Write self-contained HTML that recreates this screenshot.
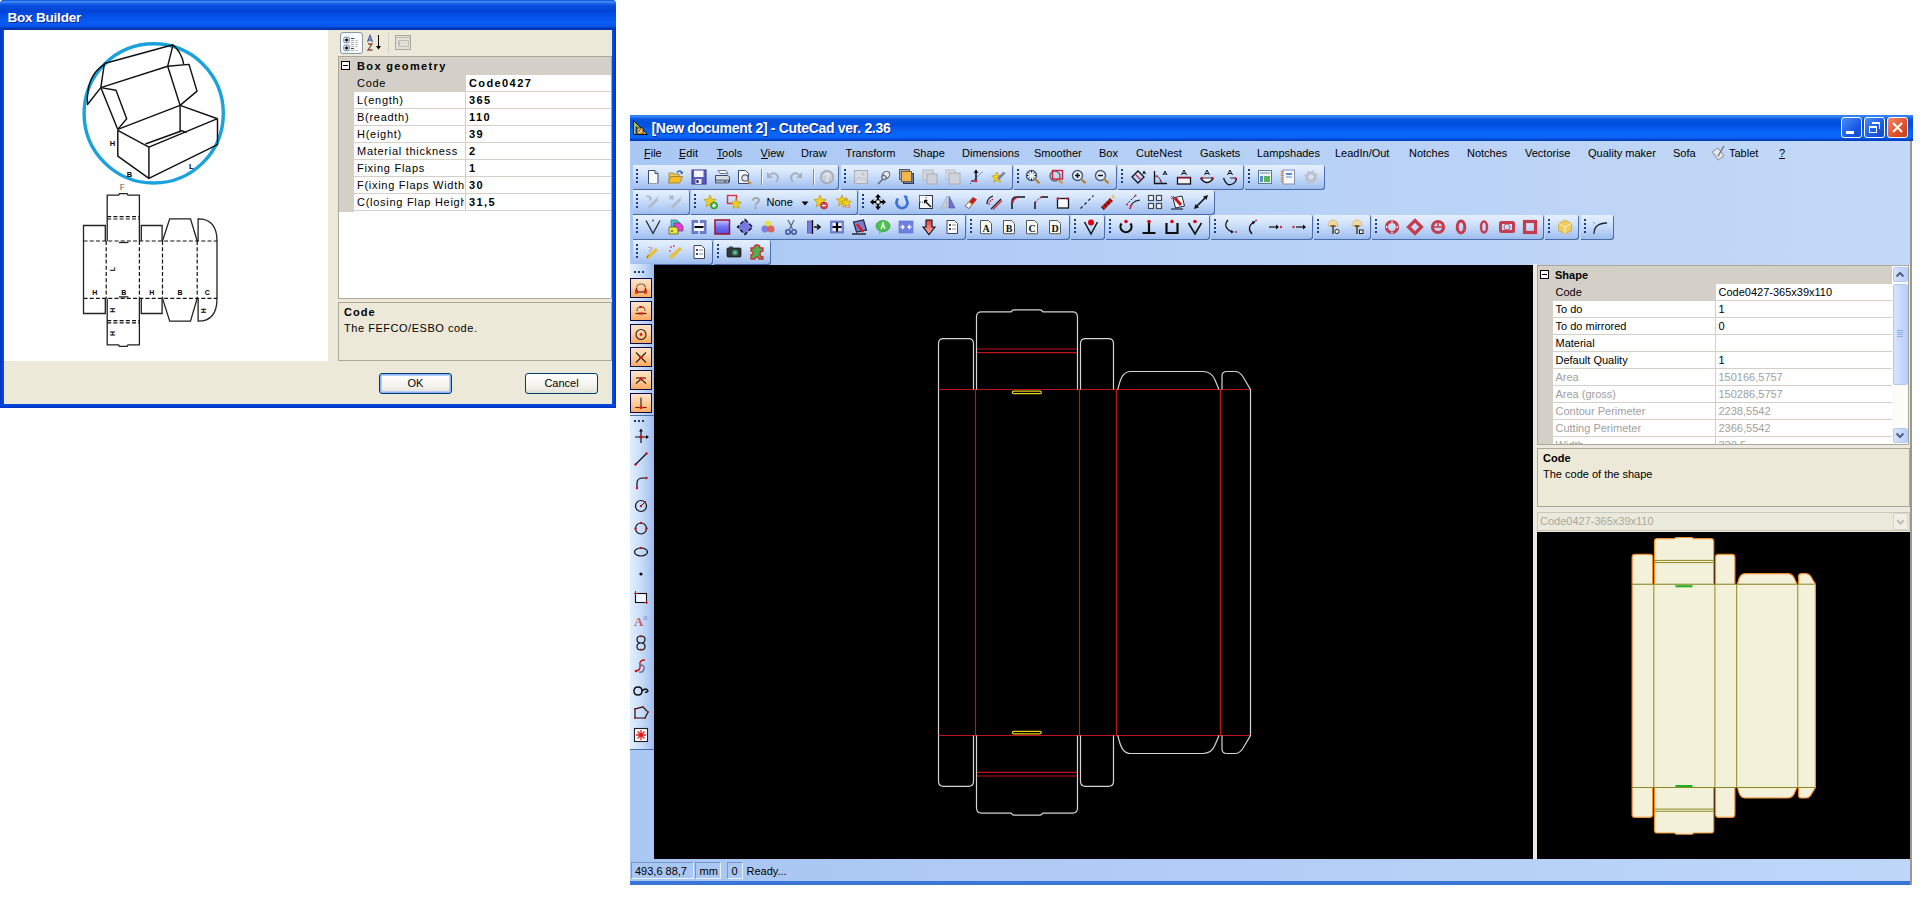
<!DOCTYPE html><html><head><meta charset="utf-8"><style>
*{box-sizing:border-box;margin:0;padding:0}
html,body{width:1926px;height:898px;overflow:hidden;background:#fff;font-family:"Liberation Sans",sans-serif;font-size:11px;color:#000;position:relative}
.a{position:absolute}
.t{position:absolute;white-space:nowrap;line-height:11px;font-size:11px}
.b{font-weight:bold}
.ic{position:absolute;width:16px;height:16px;overflow:visible}
.tb{position:absolute;height:25px;border-radius:0 3px 3px 0;background:linear-gradient(#e4effd 0px,#d9e8fc 6px,#c6dbf9 12px,#a9c5f1 21px,#9dbcef 24px);box-shadow:inset -1px -1px 0 #4a6ca8}
.grip{position:absolute;width:2px;height:14px;background:repeating-linear-gradient(#1d3f80 0px,#1d3f80 2px,transparent 2px,transparent 4px)}
.sep{position:absolute;width:1px;height:18px;background:#6a8ccb;box-shadow:1px 0 0 #fff}
</style></head><body><div class="a" style="left:0px;top:0px;width:616px;height:408px;background:#0838c8;border-radius:4px 4px 0 0"></div>
<div class="a" style="left:0px;top:0px;width:616px;height:30px;border-radius:4px 4px 0 0;background:linear-gradient(#0a48d8 0px,#3c8af6 1.5px,#2a74f0 3px,#0a50e0 5px,#0044d6 11px,#0450e6 16px,#0a5cf6 22px,#0656ee 26px,#0038b8 28.5px,#0030a8 30px)"></div>
<div class="a" style="left:0px;top:30px;width:4px;height:377px;background:linear-gradient(90deg,#0032c0,#0a4ee8)"></div>
<div class="a" style="left:612px;top:30px;width:4px;height:377px;background:linear-gradient(90deg,#0a4ee8,#0032c0)"></div>
<div class="a" style="left:0px;top:403.5px;width:616px;height:4.5px;background:linear-gradient(#0a4ee8,#0032c0)"></div>
<div class="t" style="left:7.5px;top:10.91px;font-size:13.5px;line-height:13.5px;font-weight:bold;color:#fff;text-shadow:1px 1px 0 #0a2a8e;letter-spacing:-0.2px;">Box Builder</div>
<div class="a" style="left:4px;top:30px;width:608px;height:374px;background:#ece9d8"></div>
<div class="a" style="left:4px;top:30px;width:324px;height:331px;background:#fff"></div>
<svg class="a" style="left:0;top:0" width="330" height="362" viewBox="0 0 330 362"><circle cx="153.7" cy="113.4" r="69.6" fill="none" stroke="#1ba1dc" stroke-width="3.4"/><g fill="none" stroke="#111" stroke-width="1.45" stroke-linejoin="round"><polyline points="104.4,63.5 173.0,44.8"/><polyline points="173.0,44.8 167.7,66.2"/><polyline points="100.8,87.6 167.7,66.2"/><polyline points="104.4,63.5 100.8,87.6"/><polyline points="167.7,66.2 189.0,64.4 197.0,91.1 180.1,105.4"/><polyline points="167.7,66.2 180.1,105.4"/><polyline points="100.8,87.6 116.0,90.2 126.7,118.7 117.8,129.4"/><polyline points="100.8,87.6 117.8,129.4"/><polyline points="117.8,129.4 180.1,105.4"/><polyline points="180.1,105.4 217.5,118.7"/><polyline points="117.8,130.3 148.9,147.2 217.5,118.7"/><polyline points="145.4,144.0 181.9,130.7 186.4,132.6"/><polyline points="180.1,105.4 180.1,131.2"/><polyline points="117.8,130.3 117.8,156.2 148.9,178.4 217.5,144.6 217.5,118.7"/><polyline points="148.9,147.2 148.9,178.4"/><path d="M104.4,64.4 Q85.7,76.0 87.5,104.5 L100.8,87.6"/><path d="M173.0,44.8 Q181.9,52.8 183.7,64.4"/></g><g font-family="Liberation Sans"><text x="109.7" y="146.4" font-size="7.5" font-weight="bold">H</text><text x="126.7" y="176.6" font-size="7.5" font-weight="bold">B</text><text x="189.0" y="169.0" font-size="7.5" font-weight="bold">L</text></g><g fill="none" stroke="#222" stroke-width="1.3"><polyline points="83.5,241.0 83.5,225.5 105.3,225.5 105.3,241.0"/><polyline points="83.5,298.4 83.5,313.5 105.3,313.5 105.3,298.4"/><polyline points="83.5,241.0 83.5,298.4"/><polyline points="107.2,241.0 107.2,195.2 118.6,195.2 119.5,193.6 127.1,193.6 128.0,195.2 139.4,195.2 139.4,241.0"/><polyline points="107.2,298.4 107.2,344.8 118.6,344.8 119.5,346.3 127.1,346.3 128.0,344.8 139.4,344.8 139.4,298.4"/><polyline points="141.3,241.0 141.3,225.5 162.1,225.5 162.1,241.0"/><polyline points="141.3,298.4 141.3,313.5 162.1,313.5 162.1,298.4"/><polyline points="162.5,241.0 169.7,218.8 190.5,218.8 197.2,241.0"/><polyline points="162.5,298.4 169.7,321.1 190.5,321.1 197.2,298.4"/><path d="M198.1,241.0 L198.1,218.8 Q217.0,218.8 217.0,241.0 L217.0,298.4 Q217.0,321.1 198.1,321.1 L198.1,298.4"/><polyline points="118.9,242.5 128.4,242.5"/><polyline points="118.9,296.9 128.4,296.9"/></g><g fill="none" stroke="#111" stroke-width="1.2" stroke-dasharray="4 2.2"><polyline points="83.5,241.0 217.0,241.0"/><polyline points="83.5,298.4 217.0,298.4"/><polyline points="106.2,241.0 106.2,298.4"/><polyline points="139.4,241.0 139.4,298.4"/><polyline points="162.5,241.0 162.5,298.4"/><polyline points="197.2,241.0 197.2,298.4"/><polyline points="107.2,216.7 139.4,216.7"/><polyline points="107.2,219.0 139.4,219.0"/><polyline points="107.2,320.7 139.4,320.7"/><polyline points="107.2,322.8 139.4,322.8"/></g><g font-family="Liberation Sans"><text x="94.9" y="293.6" font-size="7" font-weight="bold" text-anchor="middle" dominant-baseline="middle" transform="rotate(0 94.9 293.6)">H</text><text x="123.9" y="293.6" font-size="7" font-weight="bold" text-anchor="middle" dominant-baseline="middle" transform="rotate(0 123.9 293.6)">B</text><text x="151.7" y="293.6" font-size="7" font-weight="bold" text-anchor="middle" dominant-baseline="middle" transform="rotate(0 151.7 293.6)">H</text><text x="180.1" y="293.6" font-size="7" font-weight="bold" text-anchor="middle" dominant-baseline="middle" transform="rotate(0 180.1 293.6)">B</text><text x="207.2" y="293.6" font-size="7" font-weight="bold" text-anchor="middle" dominant-baseline="middle" transform="rotate(0 207.2 293.6)">C</text><text x="112.9" y="269.0" font-size="7" font-weight="bold" text-anchor="middle" dominant-baseline="middle" transform="rotate(-90 112.9 269.0)">L</text><text x="112.9" y="310.3" font-size="7" font-weight="bold" text-anchor="middle" dominant-baseline="middle" transform="rotate(-90 112.9 310.3)">H</text><text x="112.9" y="333.4" font-size="7" font-weight="bold" text-anchor="middle" dominant-baseline="middle" transform="rotate(-90 112.9 333.4)">H</text><text x="204.4" y="310.7" font-size="7" font-weight="bold" text-anchor="middle" dominant-baseline="middle" transform="rotate(-90 204.4 310.7)">H</text><text x="122.0" y="190.4" font-size="9" fill="#666" text-anchor="middle" font-family="Liberation Serif">F</text></g></svg>
<div class="a" style="left:340px;top:32px;width:23px;height:22px;border:1px solid #8a98a8;border-radius:3px;background:#f8fbfe"></div>
<svg class="ic" style="left:343px;top:35.5px" viewBox="0 0 16 16"><rect x="0.8" y="1.2" width="5.5" height="5.5" rx="1" fill="#dce8f4" stroke="#7a8aa0"/><path d="M2 4h3.2M3.6 2.4v3.2" stroke="#000" stroke-width="1.3"/><rect x="0.8" y="9.2" width="5.5" height="5.5" rx="1" fill="#dce8f4" stroke="#7a8aa0"/><path d="M2 12h3.2M3.6 10.4v3.2" stroke="#000" stroke-width="1.3"/><path d="M8 2.5h3.5" stroke="#303030" stroke-width="0.9"/><path d="M8 4.5h3M12.5 4.5h2M8 6.5h3M12.5 6.5h2M8 8.5h3M12.5 8.5h2M8 10.5h3M12.5 10.5h2M8 14.5h3M12.5 14.5h2" stroke="#98a0a8" stroke-width="0.8"/><path d="M8 12.5h3" stroke="#303030" stroke-width="0.9"/></svg>
<svg class="ic" style="left:366px;top:35px" viewBox="0 0 16 16"><path d="M1.5 7L4 0.5 6.5 7M2.5 5h3" stroke="#5060a8" stroke-width="1.3" fill="none"/><path d="M2 9h4L2 15h4.5" stroke="#8a4a40" stroke-width="1.3" fill="none"/><path d="M12.5 0v13.5" stroke="#000" stroke-width="1"/><path d="M10 11l2.5 3.5 2.5-3.5z" fill="#000"/></svg>
<div class="a" style="left:388px;top:33px;width:1px;height:21px;background:#d4d0c4"></div>
<div class="a" style="left:395px;top:35px;width:16px;height:15px;border:1px solid #aaa89e;background:#e4e2d8"></div>
<div class="a" style="left:396px;top:37px;width:14px;height:1px;background:#bcbab0"></div>
<div class="a" style="left:397.5px;top:39.5px;width:11px;height:7px;border:1px solid #c0beb4"></div>
<div class="a" style="left:399px;top:42px;width:1px;height:1px;background:#999"></div>
<div class="a" style="left:399px;top:44px;width:1px;height:1px;background:#999"></div>
<div class="a" style="left:338px;top:56px;width:274px;height:243px;background:#fff;border:1px solid #aca899"></div>
<div class="a" style="left:339px;top:57px;width:272px;height:18px;background:#d4d0c8"></div>
<div class="a" style="left:339px;top:57px;width:15px;height:155px;background:#d4d0c8"></div>
<div class="a" style="left:341px;top:61px;width:9px;height:9px;border:1px solid #000;background:#fff"></div>
<div class="a" style="left:343px;top:65px;width:5px;height:1px;background:#000"></div>
<div class="t" style="left:357px;top:61.2px;font-size:11px;line-height:11px;font-weight:bold;color:#000;letter-spacing:1.36px;">Box geometry</div>
<div class="a" style="left:353px;top:75px;width:112px;height:17px;background:#d4d0c8"></div>
<div class="a" style="left:353px;top:91px;width:258px;height:1px;background:#d4d0c8"></div>
<div class="a" style="left:465px;top:75px;width:1px;height:17px;background:#d4d0c8"></div>
<div class="a" style="left:357px;top:75px;width:107px;height:17px;overflow:hidden"><div class="t" style="left:0px;top:3.0px;font-size:11px;line-height:11px;color:#000;letter-spacing:0.72px;">Code</div></div>
<div class="t" style="left:469px;top:78.0px;font-size:11px;line-height:11px;font-weight:bold;color:#000;letter-spacing:1.4px;">Code0427</div>
<div class="a" style="left:353px;top:108px;width:258px;height:1px;background:#d4d0c8"></div>
<div class="a" style="left:465px;top:92px;width:1px;height:17px;background:#d4d0c8"></div>
<div class="a" style="left:357px;top:92px;width:107px;height:17px;overflow:hidden"><div class="t" style="left:0px;top:3.0px;font-size:11px;line-height:11px;color:#000;letter-spacing:0.72px;">L(ength)</div></div>
<div class="t" style="left:469px;top:95.0px;font-size:11px;line-height:11px;font-weight:bold;color:#000;letter-spacing:1.4px;">365</div>
<div class="a" style="left:353px;top:125px;width:258px;height:1px;background:#d4d0c8"></div>
<div class="a" style="left:465px;top:109px;width:1px;height:17px;background:#d4d0c8"></div>
<div class="a" style="left:357px;top:109px;width:107px;height:17px;overflow:hidden"><div class="t" style="left:0px;top:3.0px;font-size:11px;line-height:11px;color:#000;letter-spacing:0.72px;">B(readth)</div></div>
<div class="t" style="left:469px;top:112.0px;font-size:11px;line-height:11px;font-weight:bold;color:#000;letter-spacing:1.4px;">110</div>
<div class="a" style="left:353px;top:142px;width:258px;height:1px;background:#d4d0c8"></div>
<div class="a" style="left:465px;top:126px;width:1px;height:17px;background:#d4d0c8"></div>
<div class="a" style="left:357px;top:126px;width:107px;height:17px;overflow:hidden"><div class="t" style="left:0px;top:3.0px;font-size:11px;line-height:11px;color:#000;letter-spacing:0.72px;">H(eight)</div></div>
<div class="t" style="left:469px;top:129.0px;font-size:11px;line-height:11px;font-weight:bold;color:#000;letter-spacing:1.4px;">39</div>
<div class="a" style="left:353px;top:159px;width:258px;height:1px;background:#d4d0c8"></div>
<div class="a" style="left:465px;top:143px;width:1px;height:17px;background:#d4d0c8"></div>
<div class="a" style="left:357px;top:143px;width:107px;height:17px;overflow:hidden"><div class="t" style="left:0px;top:3.0px;font-size:11px;line-height:11px;color:#000;letter-spacing:0.72px;">Material thickness</div></div>
<div class="t" style="left:469px;top:146.0px;font-size:11px;line-height:11px;font-weight:bold;color:#000;letter-spacing:1.4px;">2</div>
<div class="a" style="left:353px;top:176px;width:258px;height:1px;background:#d4d0c8"></div>
<div class="a" style="left:465px;top:160px;width:1px;height:17px;background:#d4d0c8"></div>
<div class="a" style="left:357px;top:160px;width:107px;height:17px;overflow:hidden"><div class="t" style="left:0px;top:3.0px;font-size:11px;line-height:11px;color:#000;letter-spacing:0.72px;">Fixing Flaps</div></div>
<div class="t" style="left:469px;top:163.0px;font-size:11px;line-height:11px;font-weight:bold;color:#000;letter-spacing:1.4px;">1</div>
<div class="a" style="left:353px;top:193px;width:258px;height:1px;background:#d4d0c8"></div>
<div class="a" style="left:465px;top:177px;width:1px;height:17px;background:#d4d0c8"></div>
<div class="a" style="left:357px;top:177px;width:107px;height:17px;overflow:hidden"><div class="t" style="left:0px;top:3.0px;font-size:11px;line-height:11px;color:#000;letter-spacing:0.72px;">F(ixing Flaps Width</div></div>
<div class="t" style="left:469px;top:180.0px;font-size:11px;line-height:11px;font-weight:bold;color:#000;letter-spacing:1.4px;">30</div>
<div class="a" style="left:353px;top:210px;width:258px;height:1px;background:#d4d0c8"></div>
<div class="a" style="left:465px;top:194px;width:1px;height:17px;background:#d4d0c8"></div>
<div class="a" style="left:357px;top:194px;width:107px;height:17px;overflow:hidden"><div class="t" style="left:0px;top:3.0px;font-size:11px;line-height:11px;color:#000;letter-spacing:0.72px;">C(losing Flap Heigh</div></div>
<div class="t" style="left:469px;top:197.0px;font-size:11px;line-height:11px;font-weight:bold;color:#000;letter-spacing:1.4px;">31,5</div>
<div class="a" style="left:338px;top:302px;width:274px;height:59px;border:1px solid #aca899;background:#ece9d8"></div>
<div class="t" style="left:344px;top:306.7px;font-size:11px;line-height:11px;font-weight:bold;color:#000;letter-spacing:1.0px;">Code</div>
<div class="t" style="left:344px;top:322.7px;font-size:11px;line-height:11px;color:#000;letter-spacing:0.53px;">The FEFCO/ESBO code.</div>
<div class="a" style="left:379px;top:373px;width:73px;height:21px;border:1px solid #003c74;border-radius:3px;background:linear-gradient(#fff 0%,#f4f3ee 60%,#e3e1d6 100%);box-shadow:inset 0 0 0 1px #8cb4f2,inset 0 0 0 2px #b6cff6"></div><div class="t" style="left:379px;top:378px;width:73px;text-align:center">OK</div>
<div class="a" style="left:525px;top:373px;width:73px;height:21px;border:1px solid #003c74;border-radius:3px;background:linear-gradient(#fff 0%,#f4f3ee 60%,#e3e1d6 100%)"></div><div class="t" style="left:525px;top:378px;width:73px;text-align:center">Cancel</div>
<div class="a" style="left:630px;top:115px;width:1284px;height:769px;background:linear-gradient(90deg,#aac8f4,#c4d9f7)"></div>
<div class="a" style="left:630px;top:115px;width:1284px;height:26px;background:linear-gradient(#2a78f0 0px,#3c8cf8 1px,#2c7af4 2px,#0a56e2 4px,#0050de 8px,#0254e4 12px,#0862f6 16px,#0a66fa 21px,#0860f4 23px,#0044cc 24.5px,#003cb8 26px)"></div>
<div class="t" style="left:651.5px;top:121.35px;font-size:14px;line-height:14px;font-weight:bold;color:#fff;text-shadow:1px 1px 0 #0a2a8e;letter-spacing:-0.3px;">[New document 2] - CuteCad ver. 2.36</div>
<svg class="a" style="left:632px;top:119px" width="17" height="17" viewBox="0 0 17 17"><path d="M1.5 1.5v14h14z" fill="#a8c060" stroke="#101010" stroke-width="1"/><path d="M4 7.5v7h6.5z" fill="#0a5ae6" stroke="#101010" stroke-width="0.6"/><rect x="5" y="9" width="6" height="6" fill="#f0c060" stroke="#402000" stroke-width="0.8"/><path d="M6.5 12.5l2-2" stroke="#402000"/></svg>
<svg class="a" style="left:1710px;top:145px" width="16" height="16" viewBox="0 0 16 16"><path d="M2 7l6-4 6 8-6 4z" fill="#e8e8ec" stroke="#707888" stroke-width="0.8"/><path d="M8 11l6-10" stroke="#606878" stroke-width="1.2"/><path d="M4 8q2 3 5 4" fill="none" stroke="#b0b4c0"/></svg>
<div class="a" style="left:1841px;top:117px;width:21px;height:21px;border:1px solid #fff;border-radius:3px;background:linear-gradient(135deg,#4c8df8,#1a5ce8 60%,#1248c8)"></div>
<div class="a" style="left:1864px;top:117px;width:21px;height:21px;border:1px solid #fff;border-radius:3px;background:linear-gradient(135deg,#4c8df8,#1a5ce8 60%,#1248c8)"></div>
<div class="a" style="left:1887px;top:117px;width:21px;height:21px;border:1px solid #fff;border-radius:3px;background:linear-gradient(135deg,#f08a6a,#e0502a 60%,#c43c18)"></div>
<div class="a" style="left:1846px;top:131px;width:8px;height:3px;background:#fff"></div>
<div class="a" style="left:1869px;top:126px;width:8px;height:7px;border:1.5px solid #fff;border-top-width:2.5px"></div>
<div class="a" style="left:1872px;top:122px;width:8px;height:7px;border:1.5px solid #fff;border-top-width:2.5px;border-left:none;border-bottom:none"></div>
<svg class="a" style="left:1887px;top:117px" width="21" height="21"><path d="M6 6l9 9M15 6l-9 9" stroke="#fff" stroke-width="2"/></svg>
<div class="t" style="left:644px;top:148.2px;font-size:11px;line-height:11px;color:#000;">File</div>
<div class="t" style="left:679px;top:148.2px;font-size:11px;line-height:11px;color:#000;">Edit</div>
<div class="t" style="left:716.6px;top:148.2px;font-size:11px;line-height:11px;color:#000;">Tools</div>
<div class="t" style="left:760.6px;top:148.2px;font-size:11px;line-height:11px;color:#000;">View</div>
<div class="t" style="left:801px;top:148.2px;font-size:11px;line-height:11px;color:#000;">Draw</div>
<div class="t" style="left:845.6px;top:148.2px;font-size:11px;line-height:11px;color:#000;">Transform</div>
<div class="t" style="left:913px;top:148.2px;font-size:11px;line-height:11px;color:#000;">Shape</div>
<div class="t" style="left:962px;top:148.2px;font-size:11px;line-height:11px;color:#000;">Dimensions</div>
<div class="t" style="left:1034px;top:148.2px;font-size:11px;line-height:11px;color:#000;">Smoother</div>
<div class="t" style="left:1099px;top:148.2px;font-size:11px;line-height:11px;color:#000;">Box</div>
<div class="t" style="left:1136px;top:148.2px;font-size:11px;line-height:11px;color:#000;">CuteNest</div>
<div class="t" style="left:1200px;top:148.2px;font-size:11px;line-height:11px;color:#000;">Gaskets</div>
<div class="t" style="left:1257px;top:148.2px;font-size:11px;line-height:11px;color:#000;">Lampshades</div>
<div class="t" style="left:1335px;top:148.2px;font-size:11px;line-height:11px;color:#000;">LeadIn/Out</div>
<div class="t" style="left:1409px;top:148.2px;font-size:11px;line-height:11px;color:#000;">Notches</div>
<div class="t" style="left:1467px;top:148.2px;font-size:11px;line-height:11px;color:#000;">Notches</div>
<div class="t" style="left:1525px;top:148.2px;font-size:11px;line-height:11px;color:#000;">Vectorise</div>
<div class="t" style="left:1588px;top:148.2px;font-size:11px;line-height:11px;color:#000;">Quality maker</div>
<div class="t" style="left:1673px;top:148.2px;font-size:11px;line-height:11px;color:#000;">Sofa</div>
<div class="t" style="left:1729px;top:148.2px;font-size:11px;line-height:11px;color:#000;">Tablet</div>
<div class="t" style="left:1779px;top:148.2px;font-size:11px;line-height:11px;color:#000;">?</div>
<div class="a" style="left:644px;top:158px;width:6px;height:1px;background:#000"></div>
<div class="a" style="left:679px;top:158px;width:6px;height:1px;background:#000"></div>
<div class="a" style="left:716.6px;top:158px;width:7px;height:1px;background:#000"></div>
<div class="a" style="left:760.6px;top:158px;width:7px;height:1px;background:#000"></div>
<div class="a" style="left:1779px;top:158px;width:6px;height:1px;background:#000"></div>
<div class="tb" style="left:633px;top:165px;width:206px"></div>
<div class="grip" style="left:636px;top:169px"></div>
<div class="tb" style="left:841px;top:165px;width:172px"></div>
<div class="grip" style="left:844px;top:169px"></div>
<div class="tb" style="left:1014px;top:165px;width:103px"></div>
<div class="grip" style="left:1017px;top:169px"></div>
<div class="tb" style="left:1118px;top:165px;width:126px"></div>
<div class="grip" style="left:1121px;top:169px"></div>
<div class="tb" style="left:1245px;top:165px;width:80px"></div>
<div class="grip" style="left:1248px;top:169px"></div>
<div class="tb" style="left:633px;top:190px;width:57px"></div>
<div class="grip" style="left:636px;top:194px"></div>
<div class="tb" style="left:691px;top:190px;width:167px"></div>
<div class="grip" style="left:694px;top:194px"></div>
<div class="tb" style="left:859px;top:190px;width:356px"></div>
<div class="grip" style="left:862px;top:194px"></div>
<div class="tb" style="left:633px;top:214.5px;width:333px"></div>
<div class="grip" style="left:636px;top:218.5px"></div>
<div class="tb" style="left:967px;top:214.5px;width:103px"></div>
<div class="grip" style="left:970px;top:218.5px"></div>
<div class="tb" style="left:1071px;top:214.5px;width:34px"></div>
<div class="grip" style="left:1074px;top:218.5px"></div>
<div class="tb" style="left:1106px;top:214.5px;width:104px"></div>
<div class="grip" style="left:1109px;top:218.5px"></div>
<div class="tb" style="left:1211px;top:214.5px;width:102px"></div>
<div class="grip" style="left:1214px;top:218.5px"></div>
<div class="tb" style="left:1314px;top:214.5px;width:57px"></div>
<div class="grip" style="left:1317px;top:218.5px"></div>
<div class="tb" style="left:1372px;top:214.5px;width:172px"></div>
<div class="grip" style="left:1375px;top:218.5px"></div>
<div class="tb" style="left:1545px;top:214.5px;width:34px"></div>
<div class="grip" style="left:1548px;top:218.5px"></div>
<div class="tb" style="left:1581px;top:214.5px;width:33px"></div>
<div class="grip" style="left:1584px;top:218.5px"></div>
<div class="tb" style="left:633px;top:239.5px;width:80px"></div>
<div class="grip" style="left:636px;top:243.5px"></div>
<div class="tb" style="left:714px;top:239.5px;width:57px"></div>
<div class="grip" style="left:717px;top:243.5px"></div>
<div class="a" style="left:630px;top:264px;width:24px;height:486px;background:linear-gradient(90deg,#e4effd,#c6dbf9 50%,#9dbcef);box-shadow:inset 0 -1px 0 #4a6ca8"></div>
<div class="a" style="left:654px;top:264.5px;width:879px;height:594.5px;background:#000"></div>
<div class="a" style="left:1533px;top:264px;width:4px;height:595px;background:#f0efe6"></div>
<div class="a" style="left:1533px;top:264.5px;width:378px;height:595px;background:#eceadf"></div>
<div class="a" style="left:1537px;top:265px;width:372px;height:180px;background:#fff;border:1px solid #aca899"></div>
<div class="a" style="left:1538px;top:266px;width:355px;height:18px;background:#d4d0c8"></div>
<div class="a" style="left:1538px;top:266px;width:15px;height:178px;background:#d4d0c8"></div>
<div class="a" style="left:1540px;top:270px;width:9px;height:9px;border:1px solid #000;background:#fff"></div>
<div class="a" style="left:1542px;top:274px;width:5px;height:1px;background:#000"></div>
<div class="t" style="left:1555px;top:270.2px;font-size:11px;line-height:11px;font-weight:bold;color:#000;">Shape</div>
<div class="a" style="left:1538px;top:266px;width:355px;height:178px;overflow:hidden">
<div class="a" style="left:14px;top:17.5px;width:163px;height:17px;background:#d4d0c8"></div>
<div class="a" style="left:14px;top:33.5px;width:341px;height:1px;background:#d4d0c8"></div>
<div class="a" style="left:177px;top:17.5px;width:1px;height:17px;background:#d4d0c8"></div>
<div class="t" style="left:17.5px;top:21.2px;font-size:11px;line-height:11px;color:#000;">Code</div>
<div class="t" style="left:180.5px;top:21.2px;font-size:11px;line-height:11px;color:#000;">Code0427-365x39x110</div>
<div class="a" style="left:14px;top:50.5px;width:341px;height:1px;background:#d4d0c8"></div>
<div class="a" style="left:177px;top:34.5px;width:1px;height:17px;background:#d4d0c8"></div>
<div class="t" style="left:17.5px;top:38.2px;font-size:11px;line-height:11px;color:#000;">To do</div>
<div class="t" style="left:180.5px;top:38.2px;font-size:11px;line-height:11px;color:#000;">1</div>
<div class="a" style="left:14px;top:67.5px;width:341px;height:1px;background:#d4d0c8"></div>
<div class="a" style="left:177px;top:51.5px;width:1px;height:17px;background:#d4d0c8"></div>
<div class="t" style="left:17.5px;top:55.2px;font-size:11px;line-height:11px;color:#000;">To do mirrored</div>
<div class="t" style="left:180.5px;top:55.2px;font-size:11px;line-height:11px;color:#000;">0</div>
<div class="a" style="left:14px;top:84.5px;width:341px;height:1px;background:#d4d0c8"></div>
<div class="a" style="left:177px;top:68.5px;width:1px;height:17px;background:#d4d0c8"></div>
<div class="t" style="left:17.5px;top:72.2px;font-size:11px;line-height:11px;color:#000;">Material</div>
<div class="t" style="left:180.5px;top:72.2px;font-size:11px;line-height:11px;color:#000;"></div>
<div class="a" style="left:14px;top:101.5px;width:341px;height:1px;background:#d4d0c8"></div>
<div class="a" style="left:177px;top:85.5px;width:1px;height:17px;background:#d4d0c8"></div>
<div class="t" style="left:17.5px;top:89.2px;font-size:11px;line-height:11px;color:#000;">Default Quality</div>
<div class="t" style="left:180.5px;top:89.2px;font-size:11px;line-height:11px;color:#000;">1</div>
<div class="a" style="left:14px;top:118.5px;width:341px;height:1px;background:#d4d0c8"></div>
<div class="a" style="left:177px;top:102.5px;width:1px;height:17px;background:#d4d0c8"></div>
<div class="t" style="left:17.5px;top:106.2px;font-size:11px;line-height:11px;color:#a0a0a0;">Area</div>
<div class="t" style="left:180.5px;top:106.2px;font-size:11px;line-height:11px;color:#a0a0a0;">150166,5757</div>
<div class="a" style="left:14px;top:135.5px;width:341px;height:1px;background:#d4d0c8"></div>
<div class="a" style="left:177px;top:119.5px;width:1px;height:17px;background:#d4d0c8"></div>
<div class="t" style="left:17.5px;top:123.2px;font-size:11px;line-height:11px;color:#a0a0a0;">Area (gross)</div>
<div class="t" style="left:180.5px;top:123.2px;font-size:11px;line-height:11px;color:#a0a0a0;">150286,5757</div>
<div class="a" style="left:14px;top:152.5px;width:341px;height:1px;background:#d4d0c8"></div>
<div class="a" style="left:177px;top:136.5px;width:1px;height:17px;background:#d4d0c8"></div>
<div class="t" style="left:17.5px;top:140.2px;font-size:11px;line-height:11px;color:#a0a0a0;">Contour Perimeter</div>
<div class="t" style="left:180.5px;top:140.2px;font-size:11px;line-height:11px;color:#a0a0a0;">2238,5542</div>
<div class="a" style="left:14px;top:169.5px;width:341px;height:1px;background:#d4d0c8"></div>
<div class="a" style="left:177px;top:153.5px;width:1px;height:17px;background:#d4d0c8"></div>
<div class="t" style="left:17.5px;top:157.2px;font-size:11px;line-height:11px;color:#a0a0a0;">Cutting Perimeter</div>
<div class="t" style="left:180.5px;top:157.2px;font-size:11px;line-height:11px;color:#a0a0a0;">2366,5542</div>
<div class="a" style="left:14px;top:186.5px;width:341px;height:1px;background:#d4d0c8"></div>
<div class="a" style="left:177px;top:170.5px;width:1px;height:17px;background:#d4d0c8"></div>
<div class="t" style="left:17.5px;top:174.2px;font-size:11px;line-height:11px;color:#a0a0a0;">Width</div>
<div class="t" style="left:180.5px;top:174.2px;font-size:11px;line-height:11px;color:#a0a0a0;">320,5</div>
</div>
<div class="a" style="left:1892px;top:266px;width:16px;height:178px;background:#fcfcf9"></div>
<div class="a" style="left:1892.5px;top:267px;width:15px;height:15px;border:1px solid #b4c8f6;border-radius:2px;background:linear-gradient(90deg,#d6e4fd,#b9cffb)"></div>
<svg class="a" style="left:1892px;top:267px" width="16" height="15"><path d="M4.5 9.5l3.5-3.5 3.5 3.5" stroke="#4d6185" stroke-width="2" fill="none"/></svg>
<div class="a" style="left:1892.5px;top:284px;width:15px;height:101px;border:1px solid #b4c8f6;border-radius:2px;background:linear-gradient(90deg,#d6e4fd,#b9cffb)"></div>
<div class="a" style="left:1897px;top:330px;width:6px;height:1px;background:#8eb0f0"></div>
<div class="a" style="left:1897px;top:332px;width:6px;height:1px;background:#8eb0f0"></div>
<div class="a" style="left:1897px;top:334px;width:6px;height:1px;background:#8eb0f0"></div>
<div class="a" style="left:1897px;top:336px;width:6px;height:1px;background:#8eb0f0"></div>
<div class="a" style="left:1892.5px;top:428px;width:15px;height:15px;border:1px solid #b4c8f6;border-radius:2px;background:linear-gradient(90deg,#d6e4fd,#b9cffb)"></div>
<svg class="a" style="left:1892px;top:428px" width="16" height="15"><path d="M4.5 5.5l3.5 3.5 3.5-3.5" stroke="#4d6185" stroke-width="2" fill="none"/></svg>
<div class="a" style="left:1537px;top:448px;width:373px;height:59px;border:1px solid #aca899;background:#ece9d8"></div>
<div class="t" style="left:1543px;top:453.2px;font-size:11px;line-height:11px;font-weight:bold;color:#000;">Code</div>
<div class="t" style="left:1543px;top:469.2px;font-size:11px;line-height:11px;color:#000;">The code of the shape</div>
<div class="a" style="left:1537px;top:511px;width:373px;height:21px;background:#ece9d8"></div>
<div class="a" style="left:1537px;top:512px;width:373px;height:19px;border:1px solid #c9c7ba;background:#ebe9dc"></div>
<div class="t" style="left:1540px;top:516.2px;font-size:11px;line-height:11px;color:#a8a8a0;">Code0427-365x39x110</div>
<div class="a" style="left:1893px;top:513px;width:15px;height:17px;border:1px solid #d8d6cc;border-radius:2px;background:#f0efe6"></div>
<svg class="a" style="left:1893px;top:513px" width="15" height="17"><path d="M4 7l3.5 3.5 3.5-3.5" stroke="#c0beb4" stroke-width="2" fill="none"/></svg>
<svg class="a" style="left:0;top:0" width="1926" height="898"><defs><clipPath id="cv"><rect x="654" y="265" width="879" height="594"/></clipPath></defs><g clip-path="url(#cv)"><g fill="none" stroke="#c01420" stroke-width="1.2"><path d="M938.5,389.5 L1250.5,389.5"/><path d="M938.5,735.5 L1250.5,735.5"/><path d="M975.5,389.5 L975.5,735.5"/><path d="M1079.5,389.5 L1079.5,735.5"/><path d="M1116.5,389.5 L1116.5,735.5"/><path d="M1220.5,389.5 L1220.5,735.5"/><path d="M976.5,349 L1077.5,349"/><path d="M976.5,352.7 L1077.5,352.7"/><path d="M976.5,776.0 L1077.5,776.0"/><path d="M976.5,772.3 L1077.5,772.3"/></g><g fill="none" stroke="#d4d4d4" stroke-width="1.2"><path d="M938.5,389.5 L938.5,735.5"/><path d="M938.5,389.5 L938.5,343.7 Q938.5,338.7 943.5,338.7 L968.5,338.7 Q973.5,338.7 973.5,343.7 L973.5,389.5"/><path d="M938.5,735.5 L938.5,781.3 Q938.5,786.3 943.5,786.3 L968.5,786.3 Q973.5,786.3 973.5,781.3 L973.5,735.5"/><path d="M1080.5,389.5 L1080.5,343.7 Q1080.5,338.7 1085.5,338.7 L1108.5,338.7 Q1113.5,338.7 1113.5,343.7 L1113.5,389.5"/><path d="M1080.5,735.5 L1080.5,781.3 Q1080.5,786.3 1085.5,786.3 L1108.5,786.3 Q1113.5,786.3 1113.5,781.3 L1113.5,735.5"/><path d="M976.5,389.5 L976.5,316.9 Q976.5,311.9 981.5,311.9 L1011,311.9 Q1012.5,309.9 1014,309.9 L1040,309.9 Q1041.5,309.9 1043,311.9 L1072.5,311.9 Q1077.5,311.9 1077.5,316.9 L1077.5,389.5"/><path d="M976.5,735.5 L976.5,808.1 Q976.5,813.1 981.5,813.1 L1011,813.1 Q1012.5,815.1 1014,815.1 L1040,815.1 Q1041.5,815.1 1043,813.1 L1072.5,813.1 Q1077.5,813.1 1077.5,808.1 L1077.5,735.5"/><path d="M1117.8,389.5 C1120.5,378 1123,371.5 1131,371.5 L1203,371.5 C1209,371.5 1213,375 1215,380 L1219,389.5"/><path d="M1117.8,735.5 C1120.5,747.0 1123,753.5 1131,753.5 L1203,753.5 C1209,753.5 1213,750.0 1215,745.0 L1219,735.5"/><path d="M1222,389.5 L1222,376 Q1222,371.5 1227,371.5 L1235,371.5 Q1239.5,371.5 1242.5,376 L1250.5,389.5 L1250.5,735.5 L1242.5,749.0 Q1239.5,753.5 1235,753.5 L1227,753.5 Q1222,753.5 1222,749.0 L1222,735.5"/></g><g fill="none" stroke="#e6d21e" stroke-width="1.2"><rect x="1012.3" y="391.2" width="29" height="2.5" rx="1.2"/><rect x="1012.3" y="731.3" width="29" height="2.5" rx="1.2"/></g></g></svg>
<div class="a" style="left:1537px;top:532px;width:373px;height:327px;background:#000"></div>
<svg class="a" style="left:0;top:0" width="1926" height="898"><g transform="translate(1080.73,355.37) scale(0.5875)"><rect x="938.5" y="389.5" width="312" height="346" fill="#f3f1da"/><path d="M938.5,389.5 L938.5,343.7 Q938.5,338.7 943.5,338.7 L968.5,338.7 Q973.5,338.7 973.5,343.7 L973.5,389.5 Z" fill="#f3f1da" stroke="none"/><path d="M938.5,735.5 L938.5,781.3 Q938.5,786.3 943.5,786.3 L968.5,786.3 Q973.5,786.3 973.5,781.3 L973.5,735.5 Z" fill="#f3f1da" stroke="none"/><path d="M1080.5,389.5 L1080.5,343.7 Q1080.5,338.7 1085.5,338.7 L1108.5,338.7 Q1113.5,338.7 1113.5,343.7 L1113.5,389.5 Z" fill="#f3f1da" stroke="none"/><path d="M1080.5,735.5 L1080.5,781.3 Q1080.5,786.3 1085.5,786.3 L1108.5,786.3 Q1113.5,786.3 1113.5,781.3 L1113.5,735.5 Z" fill="#f3f1da" stroke="none"/><path d="M976.5,389.5 L976.5,316.9 Q976.5,311.9 981.5,311.9 L1011,311.9 Q1012.5,309.9 1014,309.9 L1040,309.9 Q1041.5,309.9 1043,311.9 L1072.5,311.9 Q1077.5,311.9 1077.5,316.9 L1077.5,389.5 Z" fill="#f3f1da" stroke="none"/><path d="M976.5,735.5 L976.5,808.1 Q976.5,813.1 981.5,813.1 L1011,813.1 Q1012.5,815.1 1014,815.1 L1040,815.1 Q1041.5,815.1 1043,813.1 L1072.5,813.1 Q1077.5,813.1 1077.5,808.1 L1077.5,735.5 Z" fill="#f3f1da" stroke="none"/><path d="M1117.8,389.5 C1120.5,378 1123,371.5 1131,371.5 L1203,371.5 C1209,371.5 1213,375 1215,380 L1219,389.5 Z" fill="#f3f1da" stroke="none"/><path d="M1117.8,735.5 C1120.5,747.0 1123,753.5 1131,753.5 L1203,753.5 C1209,753.5 1213,750.0 1215,745.0 L1219,735.5 Z" fill="#f3f1da" stroke="none"/><path d="M1222,389.5 L1222,376 Q1222,371.5 1227,371.5 L1235,371.5 Q1239.5,371.5 1242.5,376 L1250.5,389.5 L1250.5,735.5 L1242.5,749.0 Q1239.5,753.5 1235,753.5 L1227,753.5 Q1222,753.5 1222,749.0 L1222,735.5 Z" fill="#f3f1da" stroke="none"/><g fill="none" stroke="#f09030" stroke-width="1.9"><path d="M938.5,389.5 L938.5,735.5"/><path d="M938.5,389.5 L938.5,343.7 Q938.5,338.7 943.5,338.7 L968.5,338.7 Q973.5,338.7 973.5,343.7 L973.5,389.5"/><path d="M938.5,735.5 L938.5,781.3 Q938.5,786.3 943.5,786.3 L968.5,786.3 Q973.5,786.3 973.5,781.3 L973.5,735.5"/><path d="M1080.5,389.5 L1080.5,343.7 Q1080.5,338.7 1085.5,338.7 L1108.5,338.7 Q1113.5,338.7 1113.5,343.7 L1113.5,389.5"/><path d="M1080.5,735.5 L1080.5,781.3 Q1080.5,786.3 1085.5,786.3 L1108.5,786.3 Q1113.5,786.3 1113.5,781.3 L1113.5,735.5"/><path d="M976.5,389.5 L976.5,316.9 Q976.5,311.9 981.5,311.9 L1011,311.9 Q1012.5,309.9 1014,309.9 L1040,309.9 Q1041.5,309.9 1043,311.9 L1072.5,311.9 Q1077.5,311.9 1077.5,316.9 L1077.5,389.5"/><path d="M976.5,735.5 L976.5,808.1 Q976.5,813.1 981.5,813.1 L1011,813.1 Q1012.5,815.1 1014,815.1 L1040,815.1 Q1041.5,815.1 1043,813.1 L1072.5,813.1 Q1077.5,813.1 1077.5,808.1 L1077.5,735.5"/><path d="M1117.8,389.5 C1120.5,378 1123,371.5 1131,371.5 L1203,371.5 C1209,371.5 1213,375 1215,380 L1219,389.5"/><path d="M1117.8,735.5 C1120.5,747.0 1123,753.5 1131,753.5 L1203,753.5 C1209,753.5 1213,750.0 1215,745.0 L1219,735.5"/><path d="M1222,389.5 L1222,376 Q1222,371.5 1227,371.5 L1235,371.5 Q1239.5,371.5 1242.5,376 L1250.5,389.5 L1250.5,735.5 L1242.5,749.0 Q1239.5,753.5 1235,753.5 L1227,753.5 Q1222,753.5 1222,749.0 L1222,735.5"/></g><g fill="none" stroke="#8a8a22" stroke-width="1.7"><path d="M938.5,389.5 L1250.5,389.5"/><path d="M938.5,735.5 L1250.5,735.5"/><path d="M975.5,389.5 L975.5,735.5"/><path d="M1079.5,389.5 L1079.5,735.5"/><path d="M1116.5,389.5 L1116.5,735.5"/><path d="M1220.5,389.5 L1220.5,735.5"/><path d="M976.5,349 L1077.5,349"/><path d="M976.5,352.7 L1077.5,352.7"/><path d="M976.5,776.0 L1077.5,776.0"/><path d="M976.5,772.3 L1077.5,772.3"/></g><rect x="1012.3" y="391.2" width="29" height="3.5" fill="#20b020"/><rect x="1012.3" y="731.3" width="29" height="3.5" fill="#20b020"/></g></svg>
<div class="a" style="left:630px;top:859px;width:1280px;height:22px;background:linear-gradient(90deg,#a8c6f3,#bed6f8)"></div>
<div class="a" style="left:630px;top:881px;width:1280px;height:3.5px;background:#3a76d6"></div>
<div class="a" style="left:1913px;top:115px;width:20px;height:770px;background:#fff"></div>
<div class="a" style="left:1910px;top:141px;width:3px;height:744px;background:#fff"></div>
<div class="a" style="left:1910px;top:141px;width:2px;height:744px;background:#9a9890"></div>
<div class="a" style="left:631px;top:862px;width:63px;height:17px;border:1px solid;border-color:#7d97c4 #e8f0fc #e8f0fc #7d97c4"></div>
<div class="a" style="left:695px;top:862px;width:26px;height:17px;border:1px solid;border-color:#7d97c4 #e8f0fc #e8f0fc #7d97c4"></div>
<div class="a" style="left:727px;top:862px;width:16px;height:17px;border:1px solid;border-color:#7d97c4 #e8f0fc #e8f0fc #7d97c4"></div>
<div class="t" style="left:635px;top:866.2px;font-size:11px;line-height:11px;color:#000;">493,6 88,7</div>
<div class="t" style="left:699.5px;top:866.2px;font-size:11px;line-height:11px;color:#000;">mm</div>
<div class="t" style="left:731.5px;top:866.2px;font-size:11px;line-height:11px;color:#000;">0</div>
<div class="t" style="left:746.5px;top:866.2px;font-size:11px;line-height:11px;color:#000;">Ready...</div>
<svg width="0" height="0" style="position:absolute"><defs><linearGradient id="gpurp" x1="0" y1="0" x2="0" y2="1"><stop offset="0" stop-color="#c8c8ff"/><stop offset="0.5" stop-color="#7070f0"/><stop offset="1" stop-color="#5050e0"/></linearGradient><linearGradient id="gred" x1="0" y1="0" x2="0" y2="1"><stop offset="0" stop-color="#e04040"/><stop offset="1" stop-color="#ffb0b0"/></linearGradient><linearGradient id="gorange" x1="0" y1="0" x2="0" y2="1"><stop offset="0" stop-color="#ffe0b8"/><stop offset="1" stop-color="#f8a860"/></linearGradient></defs></svg>
<svg class="ic" style="left:645px;top:169px" viewBox="0 0 16 16"><path d="M3.5 1.5h6.5l3 3v10h-9.5z" fill="#fafafa" stroke="#3a4a78"/><path d="M10 1.5v3h3" fill="#dde" stroke="#3a4a78"/><path d="M4 14.5h9" stroke="#8fa0c8"/></svg>
<svg class="ic" style="left:668px;top:169px" viewBox="0 0 16 16"><path d="M1 4h4l1 1h5v8H1z" fill="#e8c860" stroke="#9a8030" stroke-width="0.8"/><path d="M2.5 7.5h12l-3 6.5H0.5z" fill="#f6bc2a" stroke="#a07820" stroke-width="0.8"/><path d="M9 3.5q3-3.5 5.5 0.5" fill="none" stroke="#2a4aa0" stroke-width="1.3"/><path d="M13 2.5l2 2-2.5 0.5z" fill="#2a4aa0"/></svg>
<svg class="ic" style="left:691px;top:169px" viewBox="0 0 16 16"><rect x="1" y="1" width="14" height="14" fill="#5c5cc0" stroke="#30308a"/><rect x="3" y="1.5" width="9.5" height="6.5" fill="#f4f4fc"/><rect x="4.5" y="10" width="6" height="5" fill="#e8e8f4"/><rect x="5.5" y="11" width="2" height="3" fill="#202050"/></svg>
<svg class="ic" style="left:714px;top:169px" viewBox="0 0 16 16"><path d="M4 1.5h8l2 3H6z" fill="#f4f4f4" stroke="#505a70" stroke-width="0.8"/><path d="M1.5 6.5h12.5l1.5 1.5v5H1.5z" fill="#d8dce4" stroke="#404a68"/><rect x="1.5" y="11" width="13" height="3" fill="#a8b0c0" stroke="#404a68" stroke-width="0.8"/><rect x="10" y="12" width="2" height="1" fill="#404a68"/></svg>
<svg class="ic" style="left:737px;top:169px" viewBox="0 0 16 16"><path d="M1.5 1.5h7l3 3v10h-10z" fill="#fafafa" stroke="#3a4a78"/><circle cx="8" cy="9" r="3.2" fill="#dfe8f4" stroke="#606878" stroke-width="1.2"/><path d="M10.5 11.5l3.5 3.5" stroke="#c89040" stroke-width="2.2"/></svg>
<svg class="ic" style="left:765px;top:169px" viewBox="0 0 16 16"><path d="M11 13q4-4 0-8q-3-2-6 1" fill="none" stroke="#a8b0c0" stroke-width="2"/><path d="M2 3v6h6z" fill="#a8b0c0"/></svg>
<svg class="ic" style="left:788px;top:169px" viewBox="0 0 16 16"><path d="M5 13q-4-4 0-8q3-2 6 1" fill="none" stroke="#a8b0c0" stroke-width="2"/><path d="M14 3v6H8z" fill="#a8b0c0"/></svg>
<svg class="ic" style="left:819px;top:169px" viewBox="0 0 16 16"><circle cx="8" cy="8" r="6.3" fill="#c8ccd4" stroke="#a0a4ac" stroke-width="1.3"/><text x="8" y="12" font-size="10" font-weight="bold" text-anchor="middle" fill="#f0f0f0" font-family="Liberation Sans">?</text></svg>
<svg class="ic" style="left:853px;top:169px" viewBox="0 0 16 16"><rect x="1.5" y="1.5" width="13" height="13" fill="#d8dce2" stroke="#a8acb4"/><path d="M2 13l4-5 3 3 2-2 3 4" fill="none" stroke="#b8bcc4"/><circle cx="10" cy="5" r="1.5" fill="#c0c4cc"/></svg>
<svg class="ic" style="left:876px;top:169px" viewBox="0 0 16 16"><path d="M2 15l5-5" stroke="#606878" stroke-width="1.5"/><ellipse cx="10" cy="6" rx="4" ry="3.3" transform="rotate(-40 10 6)" fill="#e8eaf0" stroke="#505868"/><ellipse cx="8" cy="8.5" rx="2" ry="2.5" transform="rotate(-40 8 8.5)" fill="#d0d4dc" stroke="#505868"/></svg>
<svg class="ic" style="left:899px;top:169px" viewBox="0 0 16 16"><rect x="4.5" y="4.5" width="10" height="10" fill="#6a7aa0" stroke="#2a3a60"/><rect x="0.5" y="0.5" width="10" height="10" fill="#a8a8b0" stroke="#505868"/><rect x="2.5" y="2.5" width="10" height="10" fill="#f0b850" stroke="#806020"/></svg>
<svg class="ic" style="left:922px;top:169px" viewBox="0 0 16 16"><rect x="1" y="1" width="10" height="10" fill="#d4d8de" stroke="#b4b8c0"/><rect x="5" y="5" width="10" height="10" fill="#ccd0d8" stroke="#a8acb4"/></svg>
<svg class="ic" style="left:945px;top:169px" viewBox="0 0 16 16"><rect x="1" y="1" width="9" height="9" fill="#d8dce2" stroke="#b8bcc4"/><rect x="4" y="4" width="11" height="11" fill="#d0d4da" stroke="#a8acb4"/></svg>
<svg class="ic" style="left:968px;top:169px" viewBox="0 0 16 16"><path d="M8 1v12" stroke="#101820" stroke-width="1.6"/><path d="M5.5 4L8 0.5 10.5 4z" fill="#101820"/><path d="M3 12h5" stroke="#d02030" stroke-width="1.6"/><path d="M2 15l13-13" stroke="#3050a0" stroke-dasharray="1.5 1.5"/><circle cx="8" cy="12" r="1.3" fill="#e02040"/></svg>
<svg class="ic" style="left:991px;top:169px" viewBox="0 0 16 16"><path d="M6 3l1.6 3.5 3.8.4-2.8 2.6.8 3.8L6 11.4 2.6 13.3l.8-3.8L.6 6.9l3.8-.4z" fill="#f0d020" stroke="#b09010" stroke-width="0.6"/><path d="M7 10l7-7" stroke="#8080a0" stroke-width="2.5"/><path d="M12.5 1.5l2 2" stroke="#e8e8f0" stroke-width="1.5"/></svg>
<svg class="ic" style="left:1025px;top:169px" viewBox="0 0 16 16"><circle cx="6.5" cy="6.5" r="5" fill="#e4eef8" stroke="#485878" stroke-width="1.4"/><path d="M6.5 2v1.5M6.5 9.5V11M2 6.5h1.5M9.5 6.5H11M3.5 3.5l1 1M9.5 3.5l-1 1M3.5 9.5l1-1M9.5 9.5l-1-1" stroke="#101010" stroke-width="1"/><path d="M10 10l4.5 4.5" stroke="#c8a060" stroke-width="2.6"/><path d="M10.5 10l4 4" stroke="#504830" stroke-width="0.7"/></svg>
<svg class="ic" style="left:1048px;top:169px" viewBox="0 0 16 16"><circle cx="7" cy="7" r="5" fill="#c8d4e4" stroke="#5a6a80" stroke-width="1.4"/><path d="M10 10l4.5 4.5" stroke="#c8a060" stroke-width="2.6"/><rect x="4.5" y="1.5" width="10" height="8.5" fill="none" stroke="#d02040" stroke-width="1.4"/></svg>
<svg class="ic" style="left:1071px;top:169px" viewBox="0 0 16 16"><circle cx="6.5" cy="6.5" r="5" fill="#e4eef8" stroke="#485878" stroke-width="1.4"/><path d="M4 6.5h5M6.5 4v5" stroke="#101010" stroke-width="1.5"/><path d="M10 10l4.5 4.5" stroke="#c8a060" stroke-width="2.6"/><path d="M10.5 10l4 4" stroke="#504830" stroke-width="0.7"/></svg>
<svg class="ic" style="left:1094px;top:169px" viewBox="0 0 16 16"><circle cx="6.5" cy="6.5" r="5" fill="#e4eef8" stroke="#485878" stroke-width="1.4"/><path d="M4 6.5h5" stroke="#101010" stroke-width="1.5"/><path d="M10 10l4.5 4.5" stroke="#c8a060" stroke-width="2.6"/><path d="M10.5 10l4 4" stroke="#504830" stroke-width="0.7"/></svg>
<svg class="ic" style="left:1131px;top:169px" viewBox="0 0 16 16"><path d="M1 8l6-6 6 6-6 6z" fill="none" stroke="#101418" stroke-width="1.3"/><path d="M4.5 5.5l5 5" stroke="#d02040" stroke-width="1.2"/><path d="M12 5l1-3 1.5 3M12.3 4h2" stroke="#101418" fill="none"/></svg>
<svg class="ic" style="left:1153px;top:169px" viewBox="0 0 16 16"><path d="M1.5 2v12.5H14" fill="none" stroke="#101418" stroke-width="1.3"/><path d="M2 7q5 0 6.5 7" fill="none" stroke="#303848"/><circle cx="4" cy="7.3" r="1" fill="#d02040"/><circle cx="7.5" cy="12" r="1" fill="#d02040"/><path d="M10 6l2-4 2 4M10.5 5h3" stroke="#101418" fill="none"/></svg>
<svg class="ic" style="left:1176px;top:169px" viewBox="0 0 16 16"><rect x="1.5" y="8.5" width="13" height="6.5" fill="#f4f6fa" stroke="#101418" stroke-width="1.3"/><path d="M2 9h12" stroke="#d02040"/><circle cx="4" cy="8.5" r="1" fill="#d02040"/><circle cx="12" cy="8.5" r="1" fill="#d02040"/><path d="M5.5 6l2.5-5 2.5 5M6.5 4.5h3" stroke="#101418" fill="none"/></svg>
<svg class="ic" style="left:1199px;top:169px" viewBox="0 0 16 16"><path d="M1.5 9q6.5 9 13 0" fill="#f4f6fa" stroke="#101418" stroke-width="1.3"/><path d="M1.5 9h13" stroke="#303848"/><circle cx="3" cy="9" r="1.2" fill="#d02040"/><circle cx="13" cy="9" r="1.2" fill="#d02040"/><path d="M5.5 6l2.5-5 2.5 5M6.5 4.5h3" stroke="#101418" fill="none"/></svg>
<svg class="ic" style="left:1222px;top:169px" viewBox="0 0 16 16"><path d="M1.5 9q3 9 9 6q4-2 4-6" fill="none" stroke="#101418" stroke-width="1.3"/><path d="M8 9h6" stroke="#303848"/><circle cx="13.5" cy="9.5" r="1.2" fill="#d02040"/><path d="M5.5 6l2.5-5 2.5 5M6.5 4.5h3" stroke="#101418" fill="none"/></svg>
<svg class="ic" style="left:1257px;top:169px" viewBox="0 0 16 16"><rect x="1.5" y="1.5" width="13" height="13" fill="#f0f4f8" stroke="#5878a0"/><rect x="3" y="3" width="10" height="2" fill="#a8c0e0"/><rect x="3" y="7" width="3" height="6" fill="#5a90c8"/><rect x="7" y="7" width="6" height="6" fill="#58b858"/></svg>
<svg class="ic" style="left:1280px;top:169px" viewBox="0 0 16 16"><rect x="3" y="1" width="11.5" height="14" fill="#f8f8fc" stroke="#8090b0"/><path d="M2 2v12" stroke="#d08040" stroke-width="2.5" stroke-dasharray="1 1"/><rect x="6" y="4" width="6" height="2" fill="#5a8ad0"/><path d="M6 8h6" stroke="#5a8ad0"/></svg>
<svg class="ic" style="left:1303px;top:169px" viewBox="0 0 16 16"><circle cx="8" cy="8" r="5" fill="none" stroke="#c0c4cc" stroke-width="3.5" stroke-dasharray="2.2 1.7"/><circle cx="8" cy="8" r="4" fill="none" stroke="#b8bcc4" stroke-width="2"/><circle cx="8" cy="8" r="1.8" fill="#e0e4ea"/></svg>
<svg class="ic" style="left:645px;top:194px" viewBox="0 0 16 16"><path d="M3.5 14l9-9" stroke="#b4bccc" stroke-width="3"/><path d="M12 4l1.5-1.5" stroke="#d0d4dc" stroke-width="2.5"/><path d="M1.5 2.5h3l1.5 2-1.5 2" stroke="#a8b0c0" fill="none" stroke-width="1.6"/></svg>
<svg class="ic" style="left:668px;top:194px" viewBox="0 0 16 16"><path d="M3.5 14l9-9" stroke="#b4bccc" stroke-width="3"/><path d="M12 4l1.5-1.5" stroke="#d0d4dc" stroke-width="2.5"/><path d="M1.5 1.5l4 4M5.5 1.5l-4 4" stroke="#a8b0c0" stroke-width="1.5"/></svg>
<svg class="ic" style="left:703px;top:194px" viewBox="0 0 16 16"><polygon points="7.00,1.00 8.72,5.13 13.18,5.49 9.78,8.40 10.82,12.76 7.00,10.43 3.18,12.76 4.22,8.40 0.82,5.49 5.28,5.13" fill="#f0d020" stroke="#b89810" stroke-width="0.7"/><circle cx="11" cy="11.5" r="3.5" fill="#40b040" stroke="#208020" stroke-width="0.6"/><path d="M9 11.5h4M11 9.5v4" stroke="#fff" stroke-width="1.3"/></svg>
<svg class="ic" style="left:726px;top:194px" viewBox="0 0 16 16"><rect x="1.5" y="1.5" width="9" height="8" fill="none" stroke="#e03040" stroke-width="1.4"/><polygon points="10.00,4.50 11.45,8.00 15.23,8.30 12.35,10.76 13.23,14.45 10.00,12.47 6.77,14.45 7.65,10.76 4.77,8.30 8.55,8.00" fill="#f0d020" stroke="#b89810" stroke-width="0.7"/></svg>
<svg class="ic" style="left:748px;top:194px" viewBox="0 0 16 16"><text x="8" y="14.5" font-size="16" font-weight="bold" text-anchor="middle" fill="#a4a8b0" font-family="Liberation Sans">?</text></svg>
<svg class="ic" style="left:813px;top:194px" viewBox="0 0 16 16"><polygon points="7.00,1.00 8.72,5.13 13.18,5.49 9.78,8.40 10.82,12.76 7.00,10.43 3.18,12.76 4.22,8.40 0.82,5.49 5.28,5.13" fill="#f0d020" stroke="#b89810" stroke-width="0.7"/><circle cx="11" cy="11.5" r="3.5" fill="#d84040" stroke="#a02020" stroke-width="0.6"/><path d="M9 11.5h4" stroke="#fff" stroke-width="1.3"/></svg>
<svg class="ic" style="left:836px;top:194px" viewBox="0 0 16 16"><polygon points="6.00,1.00 7.59,4.82 11.71,5.15 8.57,7.83 9.53,11.85 6.00,9.70 2.47,11.85 3.43,7.83 0.29,5.15 4.41,4.82" fill="#f0d020" stroke="#b89810" stroke-width="0.7"/><polygon points="10.00,3.50 11.45,7.00 15.23,7.30 12.35,9.76 13.23,13.45 10.00,11.47 6.77,13.45 7.65,9.76 4.77,7.30 8.55,7.00" fill="#f0d020" stroke="#b89810" stroke-width="0.7"/><rect x="9" y="11" width="5" height="2.5" fill="#e07050"/><path d="M10 12.2h3" stroke="#fff"/></svg>
<svg class="ic" style="left:870px;top:194px" viewBox="0 0 16 16"><path d="M8 1v14M1 8h14" stroke="#000" stroke-width="1.8"/><path d="M8 0l3 3.5H5zM8 16l3-3.5H5zM0 8l3.5 3V5zM16 8l-3.5 3V5z" fill="#000"/><rect x="6" y="6" width="4" height="4" fill="#fff" stroke="#000" stroke-width="0.8"/></svg>
<svg class="ic" style="left:894px;top:194px" viewBox="0 0 16 16"><path d="M4 4.5q-3 4 0 8q4 3.5 8 0q3-3.5 0-8" fill="none" stroke="#3a70d8" stroke-width="2.6"/><path d="M9.5 1l4.5 1.5-2.5 4z" fill="#3a70d8"/></svg>
<svg class="ic" style="left:917.5px;top:194px" viewBox="0 0 16 16"><rect x="1.5" y="1.5" width="13" height="13" fill="#f4f6fa" stroke="#303848"/><rect x="1.5" y="1.5" width="6.5" height="6.5" fill="#fff" stroke="#303848" stroke-dasharray="1 1"/><path d="M7 7l6 6" stroke="#101418" stroke-width="1.5"/><path d="M6 6h4L6 10z" fill="#101418"/></svg>
<svg class="ic" style="left:940px;top:194px" viewBox="0 0 16 16"><path d="M7 2v12H1z" fill="#c8ccd8" stroke="#a0a8b8" stroke-width="0.6"/><path d="M9 2v12h6z" fill="#7070c8" stroke="#5050a0" stroke-width="0.6"/></svg>
<svg class="ic" style="left:963px;top:194px" viewBox="0 0 16 16"><path d="M2 12l8-9 4 2.5-8 9z" fill="#c02020"/><path d="M2 12l3.5-4 3.5 2.5-3 4z" fill="#f4f4f4" stroke="#606060" stroke-width="0.8"/><path d="M5.5 8l3.5 2.5" stroke="#e0c020" stroke-width="1.2"/></svg>
<svg class="ic" style="left:986px;top:194px" viewBox="0 0 16 16"><path d="M1 10q0-6 6-8" fill="none" stroke="#202020" stroke-width="1.3"/><path d="M3 11q0-4 4-6" fill="none" stroke="#d02040" stroke-width="1.1" stroke-dasharray="2 1"/><path d="M5 15l10-10" stroke="#202020" stroke-width="1.3"/><path d="M7 15.5l9-9" stroke="#d02040" stroke-width="1.1"/></svg>
<svg class="ic" style="left:1010px;top:194px" viewBox="0 0 16 16"><path d="M2 15V8q0-5 5-5h8" fill="none" stroke="#101418" stroke-width="1.5"/><path d="M2.5 9q1-5 5-5.5" fill="none" stroke="#d02040" stroke-width="1.6"/></svg>
<svg class="ic" style="left:1033px;top:194px" viewBox="0 0 16 16"><path d="M2 15V8M8 3h7" fill="none" stroke="#101418" stroke-width="1.5"/><path d="M2 8l6-5" fill="none" stroke="#101418" stroke-dasharray="1.5 1.5"/><circle cx="2.5" cy="8" r="1" fill="#d02040"/><circle cx="8" cy="3.5" r="1" fill="#d02040"/></svg>
<svg class="ic" style="left:1055px;top:194px" viewBox="0 0 16 16"><rect x="2.5" y="4.5" width="11" height="9.5" fill="#f8faff" stroke="#101418" stroke-width="1.3"/><path d="M3 3v3M1.5 4.5h3M12 3v3M10.5 4.5h3" stroke="#d02040" stroke-width="1"/></svg>
<svg class="ic" style="left:1078.5px;top:194px" viewBox="0 0 16 16"><path d="M1.5 14.5l13-13" stroke="#101418" stroke-dasharray="3 2.5" stroke-width="1.1"/></svg>
<svg class="ic" style="left:1100.5px;top:194px" viewBox="0 0 16 16"><path d="M1.5 14.5l9-9" stroke="#c01818" stroke-width="4"/><path d="M1.5 14.5l9-9" stroke="#202020" stroke-width="4" stroke-dasharray="0.8 3"/><path d="M11 2l1 1.5M14 3l-1.5 1M12 0.5l.5 1.5" stroke="#e0c020" stroke-width="1.2"/><circle cx="7" cy="9" r="1" fill="#600"/></svg>
<svg class="ic" style="left:1124.5px;top:194px" viewBox="0 0 16 16"><path d="M1 11l10-10" stroke="#101418" stroke-dasharray="2 1.5"/><path d="M5 15q1-8 10-9" fill="none" stroke="#101418" stroke-width="1.2"/><path d="M5 15q0.5-3 2-5" fill="none" stroke="#d02040" stroke-width="1.5"/><circle cx="2" cy="10.5" r="1" fill="#d02040"/><circle cx="10.5" cy="1.5" r="1" fill="#d02040"/></svg>
<svg class="ic" style="left:1147px;top:194px" viewBox="0 0 16 16"><rect x="1.5" y="1.5" width="5" height="5" fill="#f4f6fa" stroke="#404858" stroke-width="1.2"/><rect x="9.5" y="1.5" width="5" height="5" fill="#f4f6fa" stroke="#404858" stroke-width="1.2"/><rect x="1.5" y="9.5" width="5" height="5" fill="#f4f6fa" stroke="#404858" stroke-width="1.2"/><rect x="9.5" y="9.5" width="5" height="5" fill="#f4f6fa" stroke="#404858" stroke-width="1.2"/></svg>
<svg class="ic" style="left:1170px;top:194px" viewBox="0 0 16 16"><path d="M3 4l9-2 2.5 10-9 2z" fill="#fafbff" stroke="#202838"/><path d="M5 4l6 7" stroke="#c01818" stroke-width="3"/><path d="M1 15h12" stroke="#202838" stroke-width="1.2"/><path d="M1 2l3 3M4 2L1 5" stroke="#e02040"/></svg>
<svg class="ic" style="left:1193px;top:194px" viewBox="0 0 16 16"><path d="M3 13l10-10" stroke="#101418" stroke-width="1.6"/><path d="M1 15l1.5-5 3.5 3.5zM15 1l-1.5 5-3.5-3.5z" fill="#101418"/></svg>
<svg class="ic" style="left:645px;top:219px" viewBox="0 0 16 16"><path d="M1 1.5l7 13 7-13" fill="none" stroke="#202838" stroke-width="1.3"/><circle cx="8" cy="1.5" r="1" fill="#505868"/></svg>
<svg class="ic" style="left:668px;top:219px" viewBox="0 0 16 16"><path d="M3 1h6l4 4v6H3z" fill="#40c8c8" stroke="#3a6a6a" stroke-width="0.7"/><path d="M6 4h6l3 3v5H6z" fill="#e040d0" stroke="#6a3a6a" stroke-width="0.7"/><path d="M1 8h7l2 2v5H1z" fill="#e8e840" stroke="#505020" stroke-width="0.7"/><path d="M3 12h2" stroke="#202020"/></svg>
<svg class="ic" style="left:691px;top:219px" viewBox="0 0 16 16"><rect x="1" y="1.5" width="5.5" height="13" fill="#7080d0" stroke="#5060b0" stroke-width="0.7"/><rect x="9.5" y="1.5" width="5.5" height="13" fill="#7080d0" stroke="#5060b0" stroke-width="0.7"/><rect x="3" y="4" width="10" height="8" fill="#f0f2ff"/><path d="M3.5 8h9" stroke="#000" stroke-width="2"/></svg>
<svg class="ic" style="left:714px;top:219px" viewBox="0 0 16 16"><rect x="1" y="1" width="14.5" height="14" fill="url(#gpurp)" stroke="#a01030" stroke-width="1.5"/></svg>
<svg class="ic" style="left:737px;top:219px" viewBox="0 0 16 16"><path d="M8 0.5l7.5 7.5-7.5 7.5L0.5 8z" fill="#7878e0" stroke="#101418" stroke-width="1.4" stroke-dasharray="4 2"/></svg>
<svg class="ic" style="left:760px;top:219px" viewBox="0 0 16 16"><circle cx="8" cy="5" r="3.5" fill="#e8e040" opacity="0.9"/><circle cx="5" cy="10" r="3.5" fill="#7070d8" opacity="0.85"/><circle cx="11" cy="10" r="3.5" fill="#e85040" opacity="0.85"/></svg>
<svg class="ic" style="left:783px;top:219px" viewBox="0 0 16 16"><path d="M5 1l4.5 9M11 1L6.5 10" stroke="#5a6a88" stroke-width="1.3"/><circle cx="5" cy="13" r="2.2" fill="none" stroke="#3a5aa0" stroke-width="1.6"/><circle cx="11" cy="13" r="2.2" fill="none" stroke="#3a5aa0" stroke-width="1.6"/></svg>
<svg class="ic" style="left:806px;top:219px" viewBox="0 0 16 16"><rect x="1.5" y="2" width="5" height="12" fill="#7a7ae0" stroke="#4a4ab0" stroke-width="0.7"/><path d="M6.5 1v14" stroke="#101010" stroke-width="1.3"/><path d="M8 8h5M11 5.5l3 2.5-3 2.5" stroke="#101010" stroke-width="1.6" fill="none"/></svg>
<svg class="ic" style="left:829px;top:219px" viewBox="0 0 16 16"><rect x="1.5" y="2" width="13" height="12" fill="#7a88d8" stroke="#5a68b8" stroke-width="0.7"/><rect x="3.5" y="4" width="9" height="8" fill="#eef0ff"/><path d="M8 3.5v9M3.5 8h9" stroke="#000" stroke-width="2.2"/></svg>
<svg class="ic" style="left:852px;top:219px" viewBox="0 0 16 16"><path d="M1.5 3l10-2 3 10-10 2z" fill="#7a7ad0" stroke="#202838" stroke-width="1.2"/><path d="M5 5l6 8" stroke="#e01818" stroke-width="2.2"/><path d="M0 15h14" stroke="#101010" stroke-width="1.3"/></svg>
<svg class="ic" style="left:875px;top:219px" viewBox="0 0 16 16"><ellipse cx="8" cy="7" rx="7" ry="5.5" fill="#50c050" stroke="#309030" stroke-width="0.7"/><path d="M5 11l-1 4 4-3z" fill="#50c050"/><path d="M6 10l2-6 2 6M6.8 8h2.4" stroke="#e8ffe8" stroke-width="1.2" fill="none"/></svg>
<svg class="ic" style="left:898px;top:219px" viewBox="0 0 16 16"><rect x="1" y="2" width="14" height="12" fill="#7080e0" stroke="#5a6ad0" stroke-width="0.6"/><path d="M2 8h4M14 8h-4M4 6l2 2-2 2M12 6l-2 2 2 2" stroke="#fff" stroke-width="1.2" fill="none"/></svg>
<svg class="ic" style="left:921px;top:219px" viewBox="0 0 16 16"><path d="M5 1h6v7h3l-6 7.5L2 8h3z" fill="url(#gred)" stroke="#101010" stroke-width="1.1"/></svg>
<svg class="ic" style="left:944px;top:219px" viewBox="0 0 16 16"><path d="M3 1.5h7.5l3 3v10H3z" fill="#fafbff" stroke="#404858"/><path d="M5 6l1-1 1 1-1 1zM5 10l1-1 1 1-1 1z" fill="none" stroke="#202020" stroke-width="0.8"/><path d="M8 6h4M8 10h4" stroke="#8890a0"/></svg>
<svg class="ic" style="left:978px;top:219px" viewBox="0 0 16 16"><path d="M2.5 1.5h8l3 3v10h-11z" fill="#fbfbf4" stroke="#505860"/><path d="M3 15h11" stroke="#9098a0"/><text x="8" y="12.5" font-size="10" font-weight="bold" text-anchor="middle" fill="#101010" font-family="Liberation Serif">A</text></svg>
<svg class="ic" style="left:1001px;top:219px" viewBox="0 0 16 16"><path d="M2.5 1.5h8l3 3v10h-11z" fill="#fbfbf4" stroke="#505860"/><path d="M3 15h11" stroke="#9098a0"/><text x="8" y="12.5" font-size="10" font-weight="bold" text-anchor="middle" fill="#101010" font-family="Liberation Serif">B</text></svg>
<svg class="ic" style="left:1024px;top:219px" viewBox="0 0 16 16"><path d="M2.5 1.5h8l3 3v10h-11z" fill="#fbfbf4" stroke="#505860"/><path d="M3 15h11" stroke="#9098a0"/><text x="8" y="12.5" font-size="10" font-weight="bold" text-anchor="middle" fill="#101010" font-family="Liberation Serif">C</text></svg>
<svg class="ic" style="left:1047px;top:219px" viewBox="0 0 16 16"><path d="M2.5 1.5h8l3 3v10h-11z" fill="#fbfbf4" stroke="#505860"/><path d="M3 15h11" stroke="#9098a0"/><text x="8" y="12.5" font-size="10" font-weight="bold" text-anchor="middle" fill="#101010" font-family="Liberation Serif">D</text></svg>
<svg class="ic" style="left:1083px;top:219px" viewBox="0 0 16 16"><path d="M1.5 3l6.5 12 6.5-12" fill="none" stroke="#101418" stroke-width="1.5"/><circle cx="8" cy="3.5" r="3" fill="#e00010"/></svg>
<svg class="ic" style="left:1118px;top:219px" viewBox="0 0 16 16"><path d="M3.5 4.5a5.5 5.5 0 1 0 9 0" fill="none" stroke="#101010" stroke-width="2.2"/><circle cx="8" cy="2.5" r="1.8" fill="#e00010"/></svg>
<svg class="ic" style="left:1141px;top:219px" viewBox="0 0 16 16"><path d="M8 3v10M1.5 14h13" stroke="#101010" stroke-width="2.2"/><circle cx="8" cy="2.5" r="1.8" fill="#e00010"/></svg>
<svg class="ic" style="left:1164px;top:219px" viewBox="0 0 16 16"><path d="M2.5 4v10h11V4" fill="none" stroke="#101010" stroke-width="2.2"/><circle cx="8" cy="2.5" r="1.8" fill="#e00010"/></svg>
<svg class="ic" style="left:1187px;top:219px" viewBox="0 0 16 16"><path d="M1.5 4l6.5 11 6.5-11" fill="none" stroke="#101010" stroke-width="1.6"/><circle cx="8" cy="2.5" r="1.8" fill="#e00010"/></svg>
<svg class="ic" style="left:1223px;top:219px" viewBox="0 0 16 16"><path d="M5 1q-6 7 4 12" fill="none" stroke="#101010" stroke-width="1.2"/><path d="M8 11l3 2-3 1.5" fill="#101010"/><circle cx="13" cy="13" r="1" fill="#e02040"/></svg>
<svg class="ic" style="left:1245px;top:219px" viewBox="0 0 16 16"><path d="M9 3q-8 5-2 12" fill="none" stroke="#101010" stroke-width="1.2"/><path d="M7 2l3.5 0.5-2 3" fill="#101010"/><circle cx="11" cy="1.5" r="1" fill="#e02040"/></svg>
<svg class="ic" style="left:1268px;top:219px" viewBox="0 0 16 16"><path d="M1 8h9" stroke="#101010" stroke-width="1.2"/><path d="M8 5.5l3 2.5-3 2.5z" fill="#101010"/><circle cx="13" cy="8" r="1.2" fill="#e02040"/></svg>
<svg class="ic" style="left:1291px;top:219px" viewBox="0 0 16 16"><path d="M5 8h9" stroke="#101010" stroke-width="1.2"/><path d="M12 5.5l3 2.5-3 2.5z" fill="#101010"/><circle cx="2.5" cy="8" r="1.2" fill="#e02040"/></svg>
<svg class="ic" style="left:1325px;top:219px" viewBox="0 0 16 16"><path d="M3 7q0-6 5-6t5 6z" fill="#f0d8a0" stroke="#c8a868" stroke-width="0.6"/><path d="M8 7v8M5.5 7h5" stroke="#5a4a20" stroke-width="1.6"/><circle cx="12" cy="12.5" r="2" fill="#fff" stroke="#202020"/></svg>
<svg class="ic" style="left:1349px;top:219px" viewBox="0 0 16 16"><path d="M3 7q0-6 5-6t5 6z" fill="#f0d8a0" stroke="#c8a868" stroke-width="0.6"/><path d="M8 7v8M5.5 7h5" stroke="#5a4a20" stroke-width="1.6"/><rect x="10.5" y="11" width="3.5" height="3.5" fill="#fff" stroke="#202020"/></svg>
<svg class="ic" style="left:1384px;top:219px" viewBox="0 0 16 16"><circle cx="8" cy="8" r="5.5" fill="none" stroke="#c63c4c" stroke-width="3.2"/><circle cx="8" cy="2.7" r="0.9" fill="#fff"/><circle cx="8" cy="13.3" r="0.9" fill="#fff"/><circle cx="2.7" cy="8" r="0.9" fill="#fff"/><circle cx="13.3" cy="8" r="0.9" fill="#fff"/></svg>
<svg class="ic" style="left:1407px;top:219px" viewBox="0 0 16 16"><path d="M8 1.5l6.5 6.5-6.5 6.5L1.5 8z" fill="none" stroke="#c63c4c" stroke-width="3.2"/></svg>
<svg class="ic" style="left:1430px;top:219px" viewBox="0 0 16 16"><circle cx="8" cy="8" r="5.5" fill="none" stroke="#c63c4c" stroke-width="3.2"/><path d="M3 8h10M8 3v5" stroke="#c63c4c" stroke-width="1.5"/></svg>
<svg class="ic" style="left:1453px;top:219px" viewBox="0 0 16 16"><ellipse cx="8" cy="8" rx="3.8" ry="6" fill="none" stroke="#c63c4c" stroke-width="3"/></svg>
<svg class="ic" style="left:1476px;top:219px" viewBox="0 0 16 16"><ellipse cx="8" cy="8" rx="3" ry="5.5" fill="none" stroke="#c63c4c" stroke-width="2.5"/></svg>
<svg class="ic" style="left:1499px;top:219px" viewBox="0 0 16 16"><rect x="1.5" y="3.5" width="13" height="9" rx="1" fill="none" stroke="#c63c4c" stroke-width="3"/><circle cx="8" cy="8" r="3" fill="none" stroke="#c63c4c" stroke-width="0.8"/></svg>
<svg class="ic" style="left:1522px;top:219px" viewBox="0 0 16 16"><rect x="2.5" y="2.5" width="11" height="11" fill="none" stroke="#c63c4c" stroke-width="3.2"/></svg>
<svg class="ic" style="left:1557px;top:219px" viewBox="0 0 16 16"><path d="M8 1l6.5 3.5v7L8 15l-6.5-3.5v-7z" fill="#f0cc60" stroke="#c8a040" stroke-width="0.7"/><path d="M1.5 4.5L8 8l6.5-3.5M8 8v7" stroke="#fff6d0" stroke-width="0.9" fill="none"/></svg>
<svg class="ic" style="left:1592px;top:219px" viewBox="0 0 16 16"><path d="M2 15q0-11 13-11" fill="none" stroke="#202838" stroke-width="1.3"/><path d="M1 3l2 2" stroke="#6a7080" stroke-dasharray="1 1"/></svg>
<svg class="ic" style="left:645px;top:244px" viewBox="0 0 16 16"><path d="M3 3l4 1-3 4" fill="none" stroke="#c8a0a0" stroke-width="1.2"/><path d="M2 14l10-9" stroke="#e8c040" stroke-width="3.5"/><path d="M2 14l1.5-3" stroke="#806020" stroke-width="1"/></svg>
<svg class="ic" style="left:668px;top:244px" viewBox="0 0 16 16"><circle cx="3" cy="3" r="0.9" fill="#e04060"/><circle cx="6" cy="2" r="0.9" fill="#e04060"/><circle cx="2" cy="7" r="0.9" fill="#e04060"/><path d="M2 14l11-10" stroke="#e8c040" stroke-width="3.5"/></svg>
<svg class="ic" style="left:691px;top:244px" viewBox="0 0 16 16"><path d="M3 1.5h7.5l3 3v10H3z" fill="#fafbff" stroke="#404858"/><path d="M5 6l1-1 1 1-1 1zM5 10l1-1 1 1-1 1z" fill="none" stroke="#202020" stroke-width="0.8"/><path d="M8 6h4M8 10h4" stroke="#8890a0"/></svg>
<svg class="ic" style="left:726px;top:244px" viewBox="0 0 16 16"><rect x="1" y="4" width="14" height="9" rx="1" fill="#303838" stroke="#101010" stroke-width="0.7"/><rect x="3" y="2.5" width="4" height="2" fill="#404848"/><circle cx="9" cy="8.5" r="3" fill="#3a8a6a"/><circle cx="9" cy="8.5" r="1.5" fill="#60c0a0"/></svg>
<svg class="ic" style="left:749px;top:244px" viewBox="0 0 16 16"><path d="M2 4h3q0-3 3-3t3 3h3v3q-3 0-3 3t3 3v2h-4q0-2-2-2t-2 2H2v-4q2 0 2-2t-2-2z" fill="#50b050" stroke="#d03030" stroke-width="1.3"/></svg>
<div class="a" style="left:760.5px;top:169px;width:1px;height:16px;background:#6a8ccb;box-shadow:1px 0 0 #f4f8ff"></div>
<div class="a" style="left:812.5px;top:169px;width:1px;height:16px;background:#6a8ccb;box-shadow:1px 0 0 #f4f8ff"></div>
<div class="t" style="left:766.5px;top:197.0px;font-size:11px;line-height:11px;color:#000;">None</div>
<svg class="a" style="left:801px;top:200.5px" width="8" height="5"><path d="M0.5 0.5h7L4 4.5z" fill="#000"/></svg>
<div class="a" style="left:634px;top:271px;width:11px;height:2px;background:repeating-linear-gradient(90deg,#1d3f80 0px,#1d3f80 2px,transparent 2px,transparent 4px)"></div>
<div class="a" style="left:634px;top:420px;width:11px;height:2px;background:repeating-linear-gradient(90deg,#1d3f80 0px,#1d3f80 2px,transparent 2px,transparent 4px)"></div>
<div class="a" style="left:630px;top:415px;width:24px;height:1px;background:#4a6ca8"></div>
<div class="a" style="left:630px;top:278px;width:22px;height:20px;border:1px solid #0a0a48;background:linear-gradient(#ffe4c8,#ffd0a0 45%,#ffb878 80%,#ffac60)"></div>
<svg class="ic" style="left:633px;top:280px" viewBox="0 0 16 16"><path d="M3.5 11V9q0-5 4.5-5t4.5 5v2" fill="none" stroke="#202020" stroke-width="1.1" stroke-dasharray="1.2 0.8"/><path d="M3 12h10" stroke="#202020" stroke-width="1.1"/><circle cx="3.5" cy="10.5" r="1.6" fill="#d02010" opacity="0.9"/><circle cx="12.5" cy="10.5" r="1.6" fill="#d02010" opacity="0.9"/><circle cx="3.5" cy="12.5" r="1.5" fill="#d83018"/><circle cx="12.5" cy="12.5" r="1.5" fill="#d83018"/></svg>
<div class="a" style="left:630px;top:301px;width:22px;height:20px;border:1px solid #0a0a48;background:linear-gradient(#ffe4c8,#ffd0a0 45%,#ffb878 80%,#ffac60)"></div>
<svg class="ic" style="left:633px;top:303px" viewBox="0 0 16 16"><path d="M4 8q0-4 4-4t4 4" fill="none" stroke="#202020" stroke-width="1.1" stroke-dasharray="1.2 0.8"/><path d="M2.5 10.5h11" stroke="#303020" stroke-width="1.2"/><path d="M5.5 10.5h5" stroke="#d02010" stroke-width="2"/><path d="M6.5 4h3" stroke="#d02010" stroke-width="2"/></svg>
<div class="a" style="left:630px;top:324px;width:22px;height:20px;border:1px solid #0a0a48;background:linear-gradient(#ffe4c8,#ffd0a0 45%,#ffb878 80%,#ffac60)"></div>
<svg class="ic" style="left:633px;top:326px" viewBox="0 0 16 16"><circle cx="8" cy="8.5" r="5" fill="none" stroke="#202020" stroke-width="1.1"/><circle cx="8" cy="8.5" r="1.4" fill="#d02010"/></svg>
<div class="a" style="left:630px;top:347px;width:22px;height:20px;border:1px solid #0a0a48;background:linear-gradient(#ffe4c8,#ffd0a0 45%,#ffb878 80%,#ffac60)"></div>
<svg class="ic" style="left:633px;top:349px" viewBox="0 0 16 16"><path d="M3 3.5l10 10M13 3.5l-10 10" stroke="#202020" stroke-width="1.1"/><circle cx="8" cy="8.5" r="1.8" fill="#d02010"/></svg>
<div class="a" style="left:630px;top:370px;width:22px;height:20px;border:1px solid #0a0a48;background:linear-gradient(#ffe4c8,#ffd0a0 45%,#ffb878 80%,#ffac60)"></div>
<svg class="ic" style="left:633px;top:372px" viewBox="0 0 16 16"><path d="M3 6h10" stroke="#202020" stroke-width="1.1"/><path d="M3 11.5L8 7l5 4.5" fill="none" stroke="#202020" stroke-width="1.1"/><circle cx="8" cy="6.8" r="1.8" fill="#d02010"/></svg>
<div class="a" style="left:630px;top:393px;width:22px;height:20px;border:1px solid #0a0a48;background:linear-gradient(#ffe4c8,#ffd0a0 45%,#ffb878 80%,#ffac60)"></div>
<svg class="ic" style="left:633px;top:395px" viewBox="0 0 16 16"><path d="M8 2.5v10M2.5 12.5h11" stroke="#202020" stroke-width="1.1"/><path d="M4.5 12.5h7" stroke="#d02010" stroke-width="1.2"/><circle cx="8" cy="12.5" r="1.6" fill="#d02010"/></svg>
<svg class="ic" style="left:633px;top:428px" viewBox="0 0 16 16"><path d="M8 15V2M2 9h13" stroke="#101010" stroke-width="1.2"/><path d="M6 3.5L8 0.5 10 3.5zM13 7l3 2-3 2z" fill="#101010"/><circle cx="8" cy="9" r="1.8" fill="#c01818"/></svg>
<svg class="ic" style="left:633px;top:451px" viewBox="0 0 16 16"><path d="M2 14l12-12" stroke="#101010" stroke-width="1.2"/><circle cx="2.5" cy="13.5" r="1.2" fill="#c01818"/><circle cx="13.5" cy="2.5" r="1.2" fill="#c01818"/></svg>
<svg class="ic" style="left:633px;top:474px" viewBox="0 0 16 16"><path d="M4 14V9q0-5 6-5h4" fill="none" stroke="#101010" stroke-width="1.2"/><circle cx="4" cy="14" r="1.2" fill="#c01818"/><circle cx="13.5" cy="4" r="1.2" fill="#c01818"/></svg>
<svg class="ic" style="left:633px;top:497px" viewBox="0 0 16 16"><circle cx="8" cy="9" r="5.5" fill="none" stroke="#101010" stroke-width="1.2"/><path d="M8 9l5-5" stroke="#101010"/><circle cx="8" cy="9" r="1.2" fill="#c01818"/><circle cx="12" cy="5" r="1" fill="#c01818"/></svg>
<svg class="ic" style="left:633px;top:520px" viewBox="0 0 16 16"><circle cx="8" cy="8.5" r="5.5" fill="none" stroke="#101010" stroke-width="1.2"/><circle cx="8" cy="3" r="1.2" fill="#c01818"/><circle cx="2.5" cy="8.5" r="1.2" fill="#c01818"/><circle cx="13.5" cy="8.5" r="1.2" fill="#c01818"/></svg>
<svg class="ic" style="left:633px;top:543px" viewBox="0 0 16 16"><ellipse cx="8" cy="9" rx="6.5" ry="4" fill="none" stroke="#101010" stroke-width="1.2"/><circle cx="8" cy="5" r="1.2" fill="#c01818"/></svg>
<svg class="ic" style="left:633px;top:566px" viewBox="0 0 16 16"><circle cx="8" cy="8" r="1.6" fill="#101010"/></svg>
<svg class="ic" style="left:633px;top:589px" viewBox="0 0 16 16"><rect x="2.5" y="4.5" width="11" height="9" fill="#f4f8ff" stroke="#101010" stroke-width="1.1"/><path d="M2.5 2v4M1 4.5h3M13.5 12v3M12 13.5h3" stroke="#c01818"/></svg>
<svg class="ic" style="left:633px;top:612px" viewBox="0 0 16 16"><text x="1" y="14" font-size="13" font-weight="bold" fill="#c06070" font-family="Liberation Serif">A</text><text x="10" y="8" font-size="8" fill="#9090c0" font-family="Liberation Sans">a</text></svg>
<svg class="ic" style="left:633px;top:635px" viewBox="0 0 16 16"><path d="M8 8q-4 0-4-3.5T8 1t4 3.5T8 8q4 0 4 3.5T8 15t-4-3.5T8 8" fill="none" stroke="#101010" stroke-width="1.2"/><circle cx="8" cy="1.5" r="1" fill="#c01818"/><circle cx="8" cy="14.5" r="1" fill="#c01818"/></svg>
<svg class="ic" style="left:633px;top:658px" viewBox="0 0 16 16"><path d="M12 2q-6 0-5 5t-4 6" fill="none" stroke="#c01818" stroke-width="1.4"/><path d="M7 7q5 0 4 4t-5 3" fill="none" stroke="#5a6a90" stroke-width="1.3"/><circle cx="3" cy="13" r="1.3" fill="#c01818"/></svg>
<svg class="ic" style="left:633px;top:681px" viewBox="0 0 16 16"><path d="M1 10q0-4 4-4t4 4-4 4-4-4M9 10q4-4 6 0q-1 2-3 1" fill="none" stroke="#101010" stroke-width="1.5"/></svg>
<svg class="ic" style="left:633px;top:704px" viewBox="0 0 16 16"><path d="M2 5v9h10l3-6-5-5z" fill="none" stroke="#101010" stroke-width="1.2"/><circle cx="2" cy="5" r="1.1" fill="#c01818"/><circle cx="10" cy="3" r="1.1" fill="#c01818"/><circle cx="15" cy="8" r="1.1" fill="#c01818"/><circle cx="12" cy="14" r="1.1" fill="#c01818"/><circle cx="2" cy="14" r="1.1" fill="#c01818"/></svg>
<svg class="ic" style="left:633px;top:727px" viewBox="0 0 16 16"><rect x="1.5" y="1.5" width="13" height="13" fill="#fff" stroke="#202020" stroke-width="1.1"/><path d="M8 3v10M3 8h10M4.5 4.5l7 7M11.5 4.5l-7 7" stroke="#e01818" stroke-width="1.3"/></svg></body></html>
